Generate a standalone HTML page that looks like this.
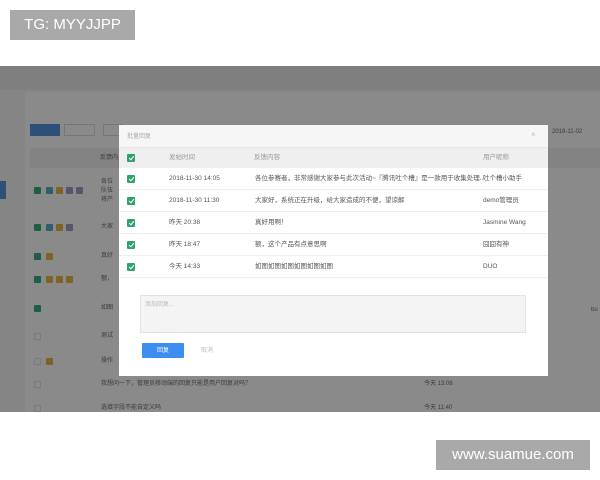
<!DOCTYPE html>
<html><head><meta charset="utf-8"><style>
*{margin:0;padding:0;box-sizing:border-box}
body{width:600px;height:480px;background:#fff;position:relative;overflow:hidden;font-family:"Liberation Sans","Noto Sans CJK SC",sans-serif;font-size:7px;color:#555}
.a{position:absolute}
.t{position:absolute;font-size:6px;line-height:8px;color:#3a3a3a;white-space:nowrap}
.cb{position:absolute;width:7px;height:7px;background:#1d5e45;border-radius:1px}
.cbm{position:absolute;width:8px;height:8px;background:#2fa36f;border-radius:1px}
.cbm:after{content:"";position:absolute;left:2.5px;top:1px;width:2px;height:4px;border:solid #fff;border-width:0 1px 1px 0;transform:rotate(40deg)}
.eb{position:absolute;width:7px;height:7px;border:1px solid #7a7a7a;border-radius:1px}
.tg{position:absolute;width:7px;height:7px;border-radius:1px}
.mr{position:absolute;left:0;width:429px;height:22px;border-bottom:1px solid #eee;background:#fff}
.mr span{position:absolute;top:7px;font-size:6.5px;line-height:8px;color:#555;white-space:nowrap}
</style></head><body>
<div class="a" style="left:10px;top:10px;width:125px;height:30px;background:#a9a9a9;color:#fff;font-size:15px;line-height:30px;text-align:center">TG: MYYJJPP</div>
<div class="a" style="left:0;top:66px;width:600px;height:346px;background:#858585"></div>
<div class="a" style="left:0;top:66px;width:600px;height:24px;background:#7f7f7f"></div>
<div class="a" style="left:0;top:181px;width:6px;height:18px;background:#2d4f78"></div>
<div class="a" style="left:25px;top:92px;width:575px;height:320px;background:#8a8a8a"></div>
<div class="a" style="left:30px;top:124px;width:30px;height:12px;background:#2d4f78"></div>
<div class="a" style="left:64px;top:124px;width:31px;height:12px;border:1px solid #777"></div>
<div class="a" style="left:103px;top:124px;width:20px;height:12px;border:1px solid #777"></div>
<div class="a" style="left:30px;top:148px;width:570px;height:20px;background:#838383"></div>
<div class="t" style="left:100px;top:154px">反馈内</div>
<div class="t" style="left:552px;top:128px">2018-11-02</div>
<div class="cb" style="left:34px;top:187px"></div>
<div class="tg" style="left:46px;top:187px;background:#2f5f6a"></div><div class="tg" style="left:56px;top:187px;background:#7d6325"></div><div class="tg" style="left:66px;top:187px;background:#58546a"></div><div class="tg" style="left:76px;top:187px;background:#58546a"></div>
<div class="t" style="left:101px;top:178px;line-height:9px">各位<br>队伍<br>将产</div>
<div class="cb" style="left:34px;top:224px"></div>
<div class="tg" style="left:46px;top:224px;background:#2f5f6a"></div><div class="tg" style="left:56px;top:224px;background:#7d6325"></div><div class="tg" style="left:66px;top:224px;background:#58546a"></div>
<div class="t" style="left:101px;top:223px">大家</div>
<div class="cb" style="left:34px;top:253px"></div><div class="tg" style="left:46px;top:253px;background:#7d6325"></div><div class="t" style="left:101px;top:252px">真好</div>
<div class="cb" style="left:34px;top:276px"></div><div class="tg" style="left:46px;top:276px;background:#7d6325"></div><div class="tg" style="left:56px;top:276px;background:#7d6325"></div><div class="tg" style="left:66px;top:276px;background:#7d6325"></div><div class="t" style="left:101px;top:275px">额，</div>
<div class="cb" style="left:34px;top:305px"></div><div class="t" style="left:101px;top:304px">如图</div>
<div class="eb" style="left:34px;top:333px"></div><div class="t" style="left:101px;top:332px">测试</div>
<div class="eb" style="left:34px;top:358px"></div><div class="tg" style="left:46px;top:358px;background:#7d6325"></div><div class="t" style="left:101px;top:357px">操作</div>
<div class="eb" style="left:34px;top:381px"></div><div class="t" style="left:101px;top:380px">我想问一下，管理员移动端的回复只能是用户回复对吗？</div><div class="t" style="left:424px;top:380px">今天 13:06</div>
<div class="eb" style="left:34px;top:405px"></div><div class="t" style="left:101px;top:404px">选填字段不能自定义吗</div><div class="t" style="left:424px;top:404px">今天 11:40</div>
<div class="t" style="left:591px;top:306px">bu</div>
<div class="a" style="left:119px;top:125px;width:429px;height:251px;background:#fff">
<div class="a" style="left:0;top:0;width:429px;height:23px;background:#f6f6f6;border-bottom:1px solid #e6e6e6"></div>
<div class="t" style="left:8px;top:8px;color:#aaa">批量回复</div>
<div class="t" style="left:412px;top:6px;color:#bbb;font-size:8px">×</div>
<div class="mr" style="top:23px;height:20px;background:#efefef"><div class="cbm" style="left:8px;top:6px"></div><span style="left:50px;top:6px;color:#999">发帖时间</span><span style="left:135px;top:6px;color:#999">反馈内容</span><span style="left:364px;top:6px;color:#999">用户昵称</span></div>
<div class="mr" style="top:43px"><div class="cbm" style="left:8px;top:7px"></div><span style="left:50px">2018-11-30 14:05</span><span style="left:136px">各位参赛者，非常感谢大家参与此次活动~『腾讯吐个槽』是一款用于收集处理...</span><span style="left:364px">吐个槽小助手</span></div>
<div class="mr" style="top:65px"><div class="cbm" style="left:8px;top:7px"></div><span style="left:50px">2018-11-30 11:30</span><span style="left:136px">大家好，系统正在升级，给大家造成的不便，望谅解</span><span style="left:364px">demo管理员</span></div>
<div class="mr" style="top:87px"><div class="cbm" style="left:8px;top:7px"></div><span style="left:50px">昨天 20:38</span><span style="left:136px">真好用啊！</span><span style="left:364px">Jasmine Wang</span></div>
<div class="mr" style="top:109px"><div class="cbm" style="left:8px;top:7px"></div><span style="left:50px">昨天 18:47</span><span style="left:136px">额，这个产品有点意思啊</span><span style="left:364px">囧囧有神</span></div>
<div class="mr" style="top:131px"><div class="cbm" style="left:8px;top:7px"></div><span style="left:50px">今天 14:33</span><span style="left:136px">如图如图如图如图如图如图</span><span style="left:364px">DUO</span></div>
<div class="a" style="left:21px;top:170px;width:386px;height:38px;background:#f4f4f4;border:1px solid #e3e3e3"></div>
<div class="t" style="left:26px;top:176px;color:#bbb">添加回复...</div>
<div class="a" style="left:23px;top:218px;width:42px;height:15px;background:#3d8ef0;border-radius:1px"></div>
<div class="t" style="left:38px;top:222px;color:#fff">回复</div>
<div class="t" style="left:82px;top:222px;color:#bbb">取消</div>
</div>
<div class="a" style="left:436px;top:440px;width:154px;height:30px;background:#a9a9a9;color:#fff;font-size:15px;line-height:30px;text-align:center">www.suamue.com</div>
</body></html>
